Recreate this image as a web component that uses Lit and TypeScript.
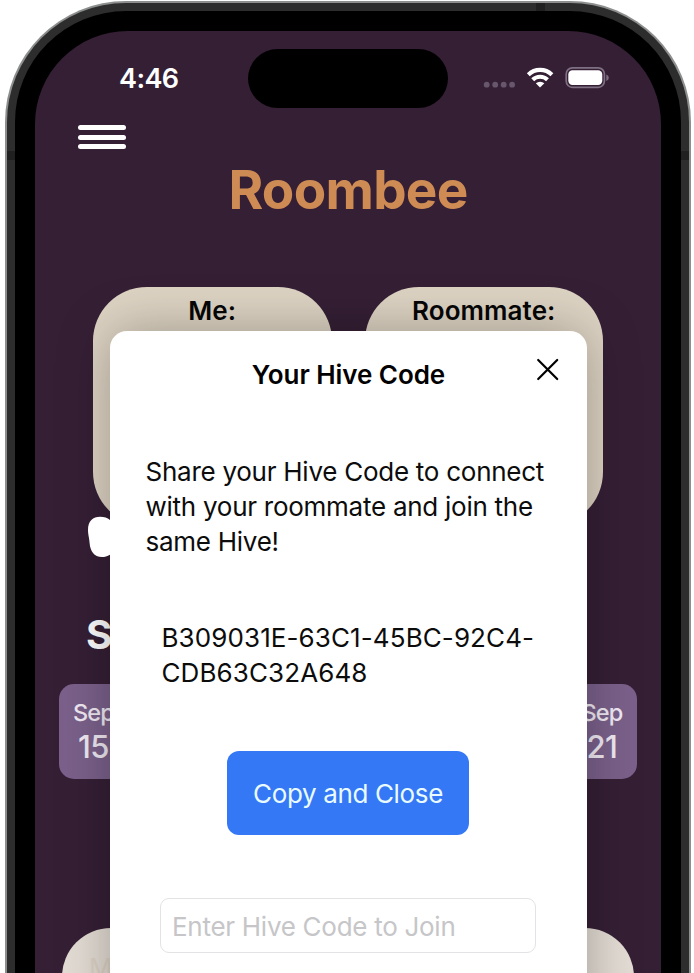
import { LitElement, html, css } from "lit";
import { customElement, property } from "lit/decorators.js";

@customElement("status-bar")
class StatusBar extends LitElement {
  static styles = css`
    :host { display: grid; grid-template-columns: 213px 200px 1fr; height: 59px; padding-top: 18px; }
    .time { color: #fff; font-size: 27px; line-height: 60px; font-weight: 600; padding-left: 84px; letter-spacing: -0.6px; }
    .island { background: #000; border-radius: 30px; height: 59px; }
    .icons { padding: 14px 0 0 33px; }
    svg { display: block; }
  `;
  render() {
    return html`
      <div class="time">4:46</div>
      <div class="island"></div>
      <div class="icons">
        <svg width="132" height="30" viewBox="481 63 132 30">
          <g fill="#67566c">
            <circle cx="486.7" cy="84.7" r="2.9" /><circle cx="495.2" cy="84.7" r="2.9" />
            <circle cx="503.7" cy="84.7" r="2.9" /><circle cx="512.1" cy="84.7" r="2.9" />
          </g>
          <g fill="none" stroke="#fff" stroke-width="4.1">
            <path d="M528.3 74.7A16.8 16.8 0 0 1 551.9 74.7" />
            <path d="M532.7 79.8A10.6 10.6 0 0 1 547.5 79.8" />
          </g>
          <path d="M540 87.6L535.8 83.3A6.4 6.4 0 0 1 544.4 83.3Z" fill="#fff" />
          <rect x="566.2" y="67.9" width="38.2" height="19.4" rx="6.2" fill="none" stroke="#7e7082" stroke-width="1.7" />
          <rect x="568.3" y="70.2" width="34" height="14.8" rx="4.2" fill="#fff" />
          <path d="M606.3 74.5Q608.8 75.5 608.8 77.7T606.3 80.9Z" fill="#7e7082" />
        </svg>
      </div>
    `;
  }
}

@customElement("day-label")
class DayLabel extends LitElement {
  @property() month = "";
  @property() day = "";
  static styles = css`
    :host { display: block; width: 42px; text-align: center; color: #f1eaf4; }
    .month { font-size: 23.5px; line-height: 30px; font-weight: 500; letter-spacing: -0.9px; }
    .day { font-size: 31px; line-height: 37px; font-weight: 500; letter-spacing: -0.6px; }
  `;
  render() {
    return html`<div class="month">${this.month}</div><div class="day">${this.day}</div>`;
  }
}

@customElement("hive-dialog")
class HiveDialog extends LitElement {
  static styles = css`
    :host {
      display: flex; flex-direction: column; box-sizing: border-box; width: 477px; height: 720px;
      background: #fff; border-radius: 17px; color: #0c0c0c; font-size: 26px;
      box-shadow: 0 0 54px rgba(0, 0, 0, 0.3);
    }
    .head { display: grid; grid-template-columns: 1fr 194px 1fr; height: 88px; }
    .title { color: #000; font-weight: 600; line-height: 88px; white-space: nowrap; text-align: center; font-size: 26px; letter-spacing: -0.05px; }
    .close { justify-self: end; margin: 27px 27px 0 0; width: 24px; height: 24px; }
    p { margin: 0; line-height: 35px; white-space: nowrap; }
    .info { padding: 35px 0 0 35.5px; letter-spacing: -0.26px; }
    .code { padding: 61px 0 0 51.5px; letter-spacing: 0.1px; }
    .copy {
      width: 242px; height: 84px; margin: 61px 0 0 117px; border-radius: 12px; background: #3478f6;
      color: #e9fbff; text-align: center; line-height: 85px; letter-spacing: -0.35px;
    }
    .join {
      box-sizing: border-box; width: 376px; height: 55px; margin: 63px 0 0 50px; padding-left: 11px;
      border: 1px solid #e3e3e5; border-radius: 9px; color: #c6c6c8; line-height: 55px; letter-spacing: -0.28px;
    }
  `;
  render() {
    return html`
      <div class="head">
        <span></span>
        <div class="title">Your Hive Code</div>
        <svg class="close" viewBox="0 0 24 24" fill="none" stroke="#000" stroke-width="2.2" stroke-linecap="round">
          <path d="M2.2 2L21.2 21M21.2 2L2.2 21" />
        </svg>
      </div>
      <p class="info">Share your Hive Code to connect<br />with your roommate and join the<br />same Hive!</p>
      <p class="code">B309031E-63C1-45BC-92C4-<br />CDB63C32A648</p>
      <div class="copy">Copy and Close</div>
      <div class="join">Enter Hive Code to Join</div>
    `;
  }
}

@customElement("app-root")
class AppRoot extends LitElement {
  static styles = css`
    :host {
      display: block; width: 694px; height: 973px; overflow: hidden; background: #fff;
      font-family: Inter, "Liberation Sans", sans-serif;
    }
    .phone {
      position: relative; box-sizing: border-box; width: 686px; height: 1300px; margin: 1px 0 0 5px;
      padding: 1.5px 2px 0; border-radius: 121px; background: #8d8f8e;
    }
    .rim { box-sizing: border-box; height: 1290px; padding: 8.5px 8px 0; border-radius: 119px; background: #2d2d2d; }
    .bezel { box-sizing: border-box; height: 1270px; padding: 20px 20px 0; border-radius: 111px; background: #000; }
    .screen { position: relative; height: 1230px; border-radius: 93px; overflow: hidden; background: #351f35; }
    .seam { position: absolute; background: #202020; }
    .seam.left { left: 2px; top: 150px; width: 8px; height: 9px; }
    .seam.right { right: 2px; top: 150px; width: 8px; height: 9px; }
    .seam.top { left: 531px; top: 2px; width: 9px; height: 8px; }
    .menu { display: grid; gap: 4.5px; width: 48.5px; margin: 17px 0 0 42.5px; }
    .menu i { height: 5px; border-radius: 2.5px; background: #fff; }
    h1 {
      margin: 11px 0 0; height: 60px; line-height: 60px; text-align: center; color: #ce8b54;
      font-size: 53px; font-weight: 700; letter-spacing: -0.7px;
    }
    .cards { display: flex; gap: 33px; margin: 67px 0 0 58px; }
    .card {
      width: 238.5px; height: 239px; border-radius: 54px; background: #ded4c4; color: #060606;
      text-align: center; font-size: 26px; font-weight: 600; line-height: 47px; letter-spacing: 0.1px;
    }
    .bee { display: block; width: 40px; height: 42px; margin: -10px 0 0 52px; position: relative; z-index: 1; clip-path: inset(0 17px 0 0); }
    h2 { margin: 52px 0 0 51px; height: 50px; line-height: 50px; font-size: 40px; font-weight: 700; color: #fff; }
    .days {
      box-sizing: border-box; display: flex; justify-content: space-between; width: 578px; height: 95px;
      margin: 24px 0 0 24px; padding: 14px 14px 0 13.5px; border-radius: 15px; background: #7b618b;
    }
    .note {
      box-sizing: border-box; width: 572px; height: 220px; margin: 149px 0 0 27px; padding: 22px 0 0 27px;
      border-radius: 49px; background: #e4ddd5; color: #ddd3c5; font-size: 26px; line-height: 36px;
    }
    hive-dialog { position: absolute; left: 75px; top: 300px; }
  `;
  render() {
    return html`
      <div class="phone">
        <div class="rim">
          <div class="bezel">
            <div class="screen">
              <status-bar></status-bar>
              <div class="menu"><i></i><i></i><i></i></div>
              <h1>Roombee</h1>
              <div class="cards">
                <div class="card">Me:</div>
                <div class="card">Roommate:</div>
              </div>
              <svg class="bee" viewBox="0 0 40 42">
                <path d="M1 14C1 5 6 .8 13 .8C18 .8 21 2 24 5V38C21 40 18 41 15 41C7 41 3.2 35 2.6 27C2.2 21 1 19 1 14Z" fill="#fff" />
              </svg>
              <h2>S</h2>
              <div class="days">
                <day-label month="Sep" day="15"></day-label>
                <day-label month="Sep" day="21"></day-label>
              </div>
              <div class="note">M</div>
              <hive-dialog></hive-dialog>
            </div>
          </div>
        </div>
        <span class="seam left"></span><span class="seam right"></span><span class="seam top"></span>
      </div>
    `;
  }
}
